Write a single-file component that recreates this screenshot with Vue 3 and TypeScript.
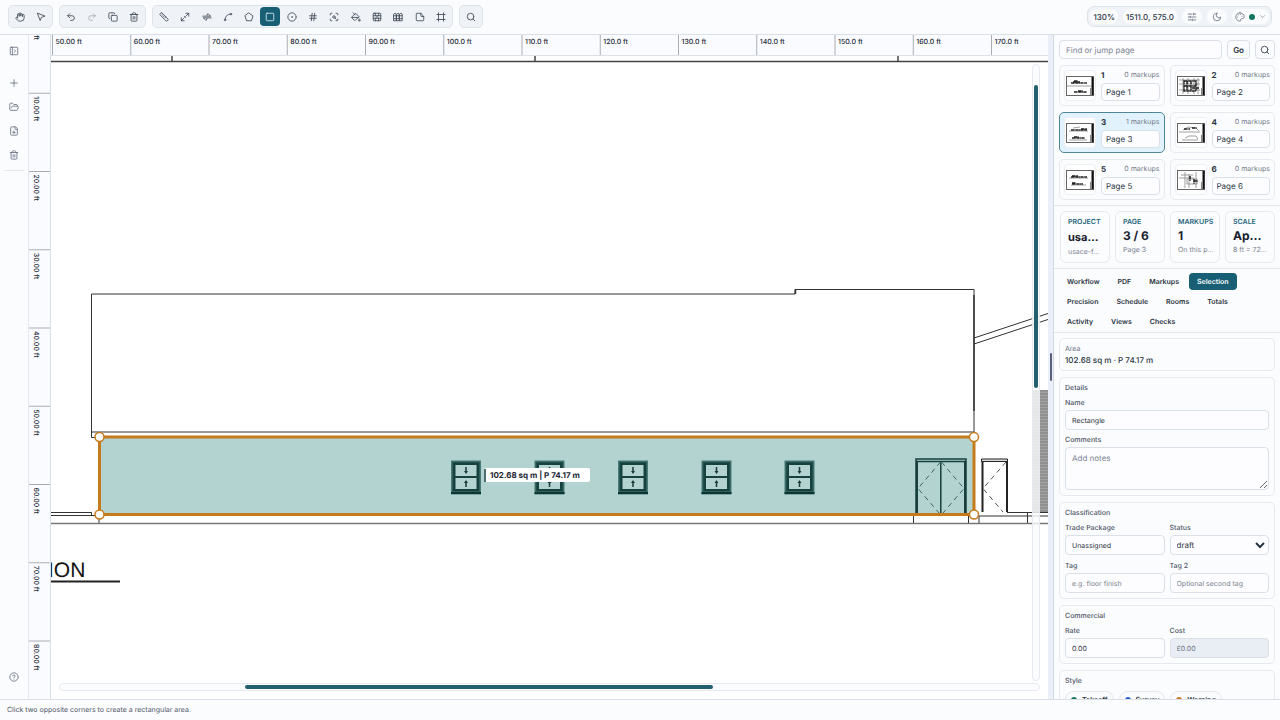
<script setup lang="ts">
import { ref } from 'vue'

interface Tool {
  label: string
  icon: string
  dim?: boolean
}

const icons: Record<string, string> = {
  hand: 'M18 11V6a2 2 0 0 0-4 0v4V4a2 2 0 0 0-4 0v6.500V6a2 2 0 0 0-4 0v8M18 8a2 2 0 1 1 4 0v6a8 8 0 0 1-8 8h-2c-2.800 0-4.500-.86-5.990-2.340l-3.600-3.600a2 2 0 0 1 2.830-2.820L7 15',
  pointer: 'M3.500 3.500l6.500 17 2.800-7.500 7.700-2.800z',
  undo: 'M9 14 4 9l5-5M4 9h10.500a5.500 5.500 0 0 1 0 11H11',
  redo: 'm15 14 5-5-5-5M20 9H9.500a5.500 5.500 0 0 0 0 11H13',
  copy: 'M10 8h10a2 2 0 0 1 2 2v10a2 2 0 0 1-2 2H10a2 2 0 0 1-2-2V10a2 2 0 0 1 2-2zM4 16a2 2 0 0 1-2-2V4a2 2 0 0 1 2-2h10a2 2 0 0 1 2 2',
  trash: 'M3 6h18M19 6v14a2 2 0 0 1-2 2H7a2 2 0 0 1-2-2V6M8 6V4a2 2 0 0 1 2-2h4a2 2 0 0 1 2 2v2M10 11v6M14 11v6',
  ruler: 'M7 2.500 21.500 17a2 2 0 0 1 0 2.500l-2 2a2 2 0 0 1-2.500 0L2.500 7a2 2 0 0 1 0-2.500l2-2a2 2 0 0 1 2.500 0zM10 6l-2 2M13 9l-2 2M16 12l-2 2',
  diagonal: 'M14 3h7v7M10 21H3v-7M21 3l-7 7M3 21l7-7M10.500 10.500l3 3',
  segments: 'M2 10h19l-5-4M22 14H3l5 4M14 4l-2 4M12 16l-2 4',
  arc: 'M5 17A12 12 0 0 1 17 5M21 5a2 2 0 1 1-4 0 2 2 0 0 1 4 0M7 19a2 2 0 1 1-4 0 2 2 0 0 1 4 0',
  polygon: 'M12 2.500 21.500 9.500 18 21H6L2.500 9.500z',
  square: 'M5 3h14a2 2 0 0 1 2 2v14a2 2 0 0 1-2 2H5a2 2 0 0 1-2-2V5a2 2 0 0 1 2-2z',
  circle: 'M22 12a10 10 0 1 1-20 0 10 10 0 0 1 20 0M13 12a1 1 0 1 1-2 0 1 1 0 0 1 2 0',
  hash: 'M4 9h16M4 15h16M10 3 8 21M16 3l-2 18',
  scan: 'M3 7V5a2 2 0 0 1 2-2h2M17 3h2a2 2 0 0 1 2 2v2M21 17v2a2 2 0 0 1-2 2h-2M7 21H5a2 2 0 0 1-2-2v-2M15 12a3 3 0 1 1-6 0 3 3 0 0 1 6 0M14.500 14.500 17 17',
  bucket: 'm19 11-8-8-8.600 8.600a2 2 0 0 0 0 2.800l5.200 5.200a2 2 0 0 0 2.800 0zM5 2l5 5M2 13h15M22 20a2 2 0 1 1-4 0c0-1.600 1.700-2.400 2-4 .3 1.600 2 2.400 2 4',
  wall: 'M5 3h14a2 2 0 0 1 2 2v14a2 2 0 0 1-2 2H5a2 2 0 0 1-2-2V5a2 2 0 0 1 2-2zM3 9h18M3 15h18M12 9v6M8 3v6M16 3v6M8 15v6M16 15v6',
  columns: 'M2 5l3-2 3 2v16H2zM9 5l3-2 3 2v16H9zM16 5l3-2 3 2v16h-6zM2 9h20M2 16h20',
  note: 'M21 11v8a2 2 0 0 1-2 2H5a2 2 0 0 1-2-2V5a2 2 0 0 1 2-2h9l7 8h-5a2 2 0 0 1-2-2V3',
  frame: 'M2 6h20M2 18h20M6 2v20M18 2v20',
  search: 'M19 11a8 8 0 1 1-16 0 8 8 0 0 1 16 0M21 21l-4.300-4.300',
  sidebar: 'M5 3h14a2 2 0 0 1 2 2v14a2 2 0 0 1-2 2H5a2 2 0 0 1-2-2V5a2 2 0 0 1 2-2zM8 3v18M13 9l3 3-3 3',
  plus: 'M4 12h16M12 4v16',
  folder: 'm6 14 1.500-2.900A2 2 0 0 1 9.200 10H20a2 2 0 0 1 1.900 2.500l-1.500 6a2 2 0 0 1-2 1.500H4a2 2 0 0 1-2-2V5a2 2 0 0 1 2-2h3.900a2 2 0 0 1 1.700.9l.8 1.200a2 2 0 0 0 1.700.9H18a2 2 0 0 1 2 2v2',
  file: 'M15 2H6a2 2 0 0 0-2 2v16a2 2 0 0 0 2 2h12a2 2 0 0 0 2-2V7zM14 2v4a2 2 0 0 0 2 2h4M9 15h6M12 12v6',
  help: 'M22 12a10 10 0 1 1-20 0 10 10 0 0 1 20 0M9.100 9a3 3 0 0 1 5.800 1c0 2-3 3-3 3M12 17v.1',
  sliders: 'M3 5h9M16 5h5M16 3v4M3 12h4M11 12h10M8 10v4M3 19h10M17 19h4M14 17v4',
  moon: 'M12 3a6 6 0 0 0 9 9 9 9 0 1 1-9-9z',
  palette: 'M12 2a10 10 0 0 0 0 20c1.700 0 2.500-1.300 1.800-2.700-1-1.900.2-3.300 2.200-3.300h2c3 0 4-2 4-4.500C22 6 17.500 2 12 2zM8 7v.1M13 6v.1M17 10v.1M6.500 12v.1',
  chevron: 'm5 9 7 7 7-7'
}

const toolGroups: { name: string; tools: Tool[] }[] = [
  { name: 'navigate', tools: [{ label: 'Pan', icon: 'hand' }, { label: 'Select', icon: 'pointer' }] },
  {
    name: 'edit',
    tools: [
      { label: 'Undo', icon: 'undo' },
      { label: 'Redo', icon: 'redo', dim: true },
      { label: 'Duplicate', icon: 'copy' },
      { label: 'Delete', icon: 'trash' }
    ]
  },
  {
    name: 'draw',
    tools: [
      { label: 'Calibrate', icon: 'ruler' },
      { label: 'Length', icon: 'diagonal' },
      { label: 'Polyline', icon: 'segments' },
      { label: 'Arc', icon: 'arc' },
      { label: 'Polygon', icon: 'polygon' },
      { label: 'Rectangle', icon: 'square' },
      { label: 'Circle', icon: 'circle' },
      { label: 'Count', icon: 'hash' },
      { label: 'Region', icon: 'scan' },
      { label: 'Fill', icon: 'bucket' },
      { label: 'Wall', icon: 'wall' },
      { label: 'Fence', icon: 'columns' },
      { label: 'Note', icon: 'note' },
      { label: 'Crop', icon: 'frame' }
    ]
  },
  { name: 'find', tools: [{ label: 'Search', icon: 'search' }] }
]
const activeTool = ref('Rectangle')

const railTools: Tool[] = [
  { label: 'New', icon: 'plus' },
  { label: 'Open', icon: 'folder' },
  { label: 'Add file', icon: 'file' },
  { label: 'Remove', icon: 'trash' }
]

const tickLabel = (feet: number) => (feet >= 100 ? feet.toFixed(1) : feet.toFixed(2)) + ' ft'
const tickStep = 78.25
const topTicks = Array.from({ length: 13 }, (_, i) => ({ at: 1.5 + i * tickStep, label: tickLabel(50 + i * 10) }))
const sideTicks = Array.from({ length: 9 }, (_, i) => ({ at: -20 + i * tickStep, label: tickLabel(i * 10) }))

const sashWindows = [451, 534.5, 618, 701.5, 784.5]
const handles = [
  { x: 99.5, y: 437 },
  { x: 974, y: 437 },
  { x: 99.5, y: 514.5 },
  { x: 974, y: 514.5 }
]

const selectedPage = ref(3)
const pages = ref([
  { id: 1, markups: 0, name: 'Page 1', thin: 'M1 10h24', bold: 'M5 7h16M7 6h7M8 5h4M8 16h13M12 15h5' },
  { id: 2, markups: 0, name: 'Page 2', thin: 'M2 4h21M2 8h21M2 14h21M6 2v16M11 2v16M17 2v16M21 2v16', bold: 'M7 5h12v10H7zM10 5v10M14 5v10M7 10h12M15 12h7' },
  { id: 3, markups: 1, name: 'Page 3', thin: 'M3 8h19M3 17h18M7 5l7-1', bold: 'M5 7h16M15 6h6M6 15h13M8 14h5' },
  { id: 4, markups: 0, name: 'Page 4', thin: 'M2 9h21M5 17h16M8 15l4-2h7l2 3M6 7l5-3 8 1 3 3', bold: 'M7 6h6M15 5h5' },
  { id: 5, markups: 0, name: 'Page 5', thin: 'M3 8h19M5 15h15', bold: 'M5 7h16M6 6h6M6 14h11M6 13h4' },
  { id: 6, markups: 0, name: 'Page 6', thin: 'M2 8h15M8 2v16M12 4v14M19 2v16M4 5h12M10 9h10v5H10z', bold: 'M17 9v5M13 6v5M17 11h4' }
])

const stats = [
  { label: 'Project', value: 'usa…', note: 'usace-f…', compact: true },
  { label: 'Page', value: '3 / 6', note: 'Page 3' },
  { label: 'Markups', value: '1', note: 'On this p…' },
  { label: 'Scale', value: 'Ap…', note: '8 ft = 72…' },
  { label: '', value: '', note: '' }
]

const tabs = ['Workflow', 'PDF', 'Markups', 'Selection', 'Precision', 'Schedule', 'Rooms', 'Totals', 'Activity', 'Views', 'Checks']
const activeTab = ref('Selection')

const query = ref('')
const form = ref({ name: 'Rectangle', comments: '', trade: 'Unassigned', status: 'draft', tag: '', tag2: '', rate: '0.00', cost: '£0.00' })
const presets = [
  { name: 'Takeoff', tone: 'green' },
  { name: 'Survey', tone: 'blue' },
  { name: 'Warning', tone: 'amber' }
]
</script>

<template>
  <div class="app">
    <header class="topbar">
      <div v-for="group in toolGroups" :key="group.name" class="group" :class="group.name">
        <button
          v-for="tool in group.tools"
          :key="tool.label"
          type="button"
          class="tool"
          :class="{ active: tool.label === activeTool, dim: tool.dim }"
          :aria-label="tool.label"
          @click="activeTool = tool.label"
        >
          <svg class="icon" viewBox="0 0 24 24"><path :d="icons[tool.icon]" /></svg>
        </button>
      </div>
      <div class="status-group">
        <span class="pill">130%</span>
        <span class="pill">1511.0, 575.0</span>
        <button type="button" class="pill" aria-label="Settings"><svg class="icon" viewBox="0 0 24 24"><path :d="icons.sliders" /></svg></button>
        <button type="button" class="pill" aria-label="Dark mode"><svg class="icon" viewBox="0 0 24 24"><path :d="icons.moon" /></svg></button>
        <button type="button" class="pill theme" aria-label="Theme">
          <svg class="icon" viewBox="0 0 24 24"><path :d="icons.palette" /></svg>
          <span class="dot green"></span>
          <svg class="icon caret" viewBox="0 0 24 24"><path :d="icons.chevron" /></svg>
        </button>
      </div>
    </header>

    <nav class="rail">
      <button type="button" class="rail-button" aria-label="Toggle sidebar"><svg class="icon" viewBox="0 0 24 24"><path :d="icons.sidebar" /></svg></button>
      <div class="rail-files">
        <button v-for="tool in railTools" :key="tool.label" type="button" class="rail-button" :aria-label="tool.label">
          <svg class="icon" viewBox="0 0 24 24"><path :d="icons[tool.icon]" /></svg>
        </button>
      </div>
      <button type="button" class="rail-button help" aria-label="Help"><svg class="icon" viewBox="0 0 24 24"><path :d="icons.help" /></svg></button>
    </nav>

    <main class="workspace">
      <svg class="ruler side">
        <g v-for="tick in sideTicks" :key="tick.at" :transform="`translate(0 ${tick.at})`">
          <path d="M0 0H22" />
          <text transform="translate(5 3) rotate(90)">{{ tick.label }}</text>
        </g>
      </svg>
      <svg class="ruler top">
        <g v-for="tick in topTicks" :key="tick.at" :transform="`translate(${tick.at} 0)`">
          <path d="M0 0V21" />
          <text x="3" y="9">{{ tick.label }}</text>
        </g>
      </svg>
      <div class="stage">
        <svg class="drawing">
          <defs>
            <pattern id="siding" width="4" height="3" patternUnits="userSpaceOnUse">
              <rect width="4" height="3" fill="#a2a2a2" />
              <path d="M0 1H4" stroke="#808080" stroke-width="1" />
            </pattern>
          </defs>
          <g transform="translate(-51 -56)" fill="none" stroke="#333" stroke-width="1">
            <path d="M51 61.500H1400M172 56V61M535 56V61M898 56V61" stroke="#444" stroke-width="1.500" />
            <path d="M99 437.500H91.500V294H795V289.500H974V432H91.500" />
            <path d="M974 295V411M795.500 289.500V294" stroke-width="1.500" />
            <path d="M974 338 1122 289M974 344 1122 295" />
            <path d="M51 512.500H91.500V516M51 515.500H99M99 515V524" />
            <path d="M51 523.500H1400" stroke="#777" stroke-width="1.500" />
            <path d="M913.500 516V523M968.500 516V523M979 516V523M975 516H1400M1007 512.500H1400M1027.500 512V523" />
            <rect x="1032" y="390" width="368" height="122" fill="url(#siding)" stroke="none" />

            <rect x="99.500" y="437" width="874.500" height="77.500" fill="#b3d3d0" stroke="none" />

            <g v-for="x in sashWindows" :key="x" :transform="`translate(${x} 460)`">
              <rect x="0.500" y="1" width="29" height="33" fill="#31605c" stroke="#4a7b77" />
              <rect x="2" y="2.500" width="26" height="28.500" fill="#16413f" stroke="none" />
              <path d="M4.500 5H25.500V16H4.500zM4.500 18H25.500V29H4.500z" fill="#b3d3d0" stroke="none" />
              <path d="M0 33H30" stroke="#0e3533" stroke-width="2" />
              <path d="M15 7V12M15 22V27" stroke="#163b3a" stroke-width="1.500" />
              <path d="M13 11h4L15 14zM13 23h4L15 20z" fill="#163b3a" stroke="none" />
            </g>

            <g stroke="#173f3d">
              <path d="M916 514V459H966V514M916 461.500H966M940.800 461V514" stroke-width="1.500" />
              <path d="M917 461V514M965 461V514" stroke-width="2" />
              <path d="M940.500 462 918 488.500 939 513M941.500 462 964 488.500 943 513" stroke="#3d6663" stroke-dasharray="5 4" />
            </g>
            <g stroke="#222">
              <path d="M981.500 459H1007.500V461.500H981.500z" fill="#ddd" />
              <path d="M982.500 461V512M1007 461V512" stroke-width="2" />
              <path d="M1006 462 983 488.500 1003 512" stroke="#555" stroke-dasharray="5 4" />
            </g>

            <rect x="99.500" y="437" width="874.500" height="77.500" stroke="#c57a1c" stroke-width="3" />
            <circle v-for="(handle, i) in handles" :key="i" :cx="handle.x" :cy="handle.y" r="4.500" fill="#fff" stroke="#c57a1c" stroke-width="1.500" />

            <rect x="484" y="468" width="106" height="14" rx="2" fill="#fff" stroke="none" />
            <path d="M485 469V482" stroke="#16413f" stroke-width="1.500" />
            <text class="measure" x="490" y="478">102.68 sq m | P 74.17 m</text>

            <text class="sheet-title" x="48" y="577">ION</text>
            <path d="M51 581.500H120" stroke="#222" stroke-width="2" />
          </g>
        </svg>
        <div class="scroll vertical"><span class="thumb"></span></div>
        <div class="scroll horizontal"><span class="thumb"></span></div>
      </div>
    </main>

    <div class="splitter"><span class="grip"></span></div>

    <aside class="panel">
      <section class="pages">
        <form class="jump" @submit.prevent>
          <input v-model="query" class="field" type="text" placeholder="Find or jump page" aria-label="Find or jump page" />
          <button type="submit" class="small-button">Go</button>
          <button type="button" class="small-button square" aria-label="Search pages"><svg class="icon" viewBox="0 0 24 24"><path :d="icons.search" /></svg></button>
        </form>
        <div class="page-grid">
          <article v-for="page in pages" :key="page.id" class="page-card" :class="{ selected: page.id === selectedPage }" @click="selectedPage = page.id">
            <div class="thumbnail">
              <svg viewBox="0 0 28 20">
                <rect x="0.500" y="0.500" width="27" height="19" fill="#fff" stroke="#666" />
                <path :d="page.thin" fill="none" stroke="#777" stroke-width="0.700" />
                <path :d="page.bold" fill="none" stroke="#222" stroke-width="1.500" stroke-dasharray="3 .4 1 .3" />
                <path d="M26.500 1V19" stroke="#111" stroke-width="2" />
                <path d="M24.500 12V19" stroke="#888" stroke-width="1" />
              </svg>
            </div>
            <div class="page-info">
              <div class="page-meta"><strong>{{ page.id }}</strong><span>{{ page.markups }} markups</span></div>
              <input v-model="page.name" class="field" type="text" :aria-label="`Name of page ${page.id}`" />
            </div>
          </article>
        </div>
      </section>

      <section class="stats">
        <div v-for="stat in stats" :key="stat.label" class="stat">
          <span class="stat-label">{{ stat.label }}</span>
          <strong :class="{ compact: stat.compact }">{{ stat.value }}</strong>
          <span class="stat-note">{{ stat.note }}</span>
        </div>
      </section>

      <nav class="tabs">
        <button v-for="tab in tabs" :key="tab" type="button" class="tab" :class="{ active: tab === activeTab }" @click="activeTab = tab">{{ tab }}</button>
      </nav>

      <div class="properties">
        <section class="card summary">
          <span class="caption">Area</span>
          <span class="reading">102.68 sq m · P 74.17 m</span>
        </section>
        <section class="card">
          <h2>Details</h2>
          <div class="cell"><label for="name">Name</label><input id="name" v-model="form.name" class="field" type="text" /></div>
          <div class="cell"><label for="comments">Comments</label><textarea id="comments" v-model="form.comments" class="field" placeholder="Add notes"></textarea></div>
        </section>
        <section class="card">
          <h2>Classification</h2>
          <div class="pair">
            <div class="cell"><label for="trade">Trade Package</label><input id="trade" v-model="form.trade" class="field" type="text" /></div>
            <div class="cell">
              <label for="status">Status</label>
              <select id="status" v-model="form.status" class="field"><option>draft</option></select>
            </div>
            <div class="cell"><label for="tag">Tag</label><input id="tag" v-model="form.tag" class="field" type="text" placeholder="e.g. floor finish" /></div>
            <div class="cell"><label for="tag2">Tag 2</label><input id="tag2" v-model="form.tag2" class="field" type="text" placeholder="Optional second tag" /></div>
          </div>
        </section>
        <section class="card">
          <h2>Commercial</h2>
          <div class="pair">
            <div class="cell"><label for="rate">Rate</label><input id="rate" v-model="form.rate" class="field" type="text" /></div>
            <div class="cell"><label for="cost">Cost</label><input id="cost" v-model="form.cost" class="field" type="text" disabled /></div>
          </div>
        </section>
        <section class="card">
          <h2>Style</h2>
          <div class="presets">
            <button v-for="preset in presets" :key="preset.name" type="button" class="preset"><span class="dot" :class="preset.tone"></span>{{ preset.name }}</button>
          </div>
        </section>
      </div>
    </aside>

    <footer class="footer">Click two opposite corners to create a rectangular area.</footer>
  </div>
</template>

<style>
body {
  margin: 0;
}
</style>

<style scoped>
.app {
  display: grid;
  grid-template: auto minmax(0, 1fr) auto / 29px minmax(0, 1fr) 5px 227px;
  height: 100vh;
  font-family: Inter, "Liberation Sans", sans-serif;
  font-size: 7px;
  line-height: 10px;
  text-rendering: geometricPrecision;
  color: #2a3441;
  background: #fbfcfe;
}
.app *,
.app *::before {
  box-sizing: border-box;
}
button,
input,
select,
textarea {
  font: inherit;
  color: inherit;
  margin: 0;
  text-rendering: inherit;
}
button {
  display: flex;
  align-items: center;
  justify-content: center;
  padding: 0;
  border: 0;
  background: none;
}
.icon {
  width: 10px;
  height: 10px;
  fill: none;
  stroke: currentColor;
  stroke-width: 2;
  stroke-linecap: round;
  stroke-linejoin: round;
}
.topbar {
  grid-column: 1 / -1;
  display: flex;
  align-items: center;
  gap: 6px;
  padding: 5px 8px 6px;
  border-bottom: 1px solid #dbe0e8;
}
.group {
  display: flex;
  justify-content: space-between;
  height: 23px;
  padding: 1px;
  border: 1px solid #dde3ea;
  border-radius: 5px;
  background: #eff3f8;
}
.navigate {
  width: 45px;
}
.edit {
  width: 87px;
}
.draw {
  width: 301px;
}
.find {
  width: 24px;
}
.tool {
  width: 20px;
  height: 19px;
  border-radius: 4px;
  color: #3c4653;
}
.tool.active {
  color: #d8eaf0;
  background: #185f76;
}
.tool.dim {
  opacity: 0.4;
}
.status-group {
  display: flex;
  align-items: center;
  gap: 5px;
  margin-left: auto;
  padding: 2px;
  border: 1px solid #dde3ea;
  border-radius: 7px;
  background: #eff3f8;
}
.pill {
  display: flex;
  align-items: center;
  justify-content: center;
  min-width: 20px;
  height: 15px;
  padding: 0 3px;
  border-radius: 8px;
  background: #fbfcfe;
  font-size: 8px;
  font-weight: 500;
  white-space: nowrap;
}
.pill .icon {
  color: #667080;
}
.theme {
  gap: 4px;
}
.pill .caret {
  width: 7px;
  height: 7px;
}
.dot {
  flex: none;
  width: 6px;
  height: 6px;
  border-radius: 50%;
}
.green {
  background: #147660;
}
.blue {
  background: #2b5bd0;
}
.amber {
  background: #c57a1c;
}
.rail {
  display: flex;
  flex-direction: column;
  align-items: center;
  gap: 12px;
  padding: 6px 0 12px;
  border-right: 1px solid #e3e7ee;
  color: #667080;
}
.rail-button {
  width: 20px;
  height: 20px;
}
.rail-files {
  display: flex;
  flex-direction: column;
  gap: 4px;
  padding-bottom: 5px;
  border-bottom: 1px solid #e3e7ee;
}
.help {
  margin-top: auto;
}
.workspace {
  display: grid;
  grid-template: 21px minmax(0, 1fr) / 22px minmax(0, 1fr);
  min-width: 0;
}
.ruler {
  width: 100%;
  height: 100%;
  background: #fafbfe;
}
.ruler path {
  stroke: #a9aeb6;
  stroke-width: 1;
}
.ruler text {
  font-size: 7px;
  font-weight: 500;
  fill: #222a35;
}
.side {
  grid-row: 1 / 3;
  border-right: 1px solid #dbe0e8;
}
.top {
  border-bottom: 1px solid #dbe0e8;
}
.stage {
  position: relative;
  min-width: 0;
  overflow: hidden;
  background: #fff;
}
.drawing {
  display: block;
  width: 100%;
  height: 100%;
}
.measure {
  font-size: 8px;
  font-weight: 700;
  fill: #1b2430;
  stroke: none;
}
.sheet-title {
  font-family: "Liberation Sans", sans-serif;
  font-size: 21px;
  fill: #111;
  stroke: none;
}
.scroll {
  position: absolute;
  display: flex;
  border: 1px solid #e6eaf0;
  border-radius: 5px;
  background: rgba(249, 251, 254, 0.8);
}
.vertical {
  top: 8px;
  right: 8px;
  bottom: 18px;
  width: 8px;
  padding: 20px 1px 0;
  justify-content: center;
}
.horizontal {
  right: 8px;
  bottom: 8px;
  left: 8px;
  height: 8px;
  padding-left: 185px;
  align-items: center;
}
.thumb {
  border-radius: 2px;
  background: #23606f;
}
.vertical .thumb {
  width: 4px;
  height: 51%;
}
.horizontal .thumb {
  width: 59%;
  height: 4px;
}
.splitter {
  display: flex;
  align-items: center;
  justify-content: center;
  background: #ebeff8;
}
.grip {
  width: 2px;
  height: 28px;
  border-radius: 1px;
  background: #5c5f7c;
}
.panel {
  display: flex;
  flex-direction: column;
  min-height: 0;
  border-left: 1px solid #d3d9e3;
}
.pages {
  display: flex;
  flex-direction: column;
  gap: 6px;
  padding: 5px;
  border-bottom: 1px solid #e3e7ee;
}
.jump {
  display: flex;
  gap: 5px;
}
.field {
  width: 100%;
  min-width: 0;
  height: 20px;
  padding: 0 6px;
  border: 1px solid #dbe0e8;
  border-radius: 4px;
  background: #fdfdff;
  outline: 0;
}
.field::placeholder {
  color: #7a828e;
  opacity: 1;
}
.jump .field,
.page-info .field {
  font-size: 8px;
}
.small-button {
  flex: none;
  height: 19px;
  padding: 0 5px;
  border: 1px solid #dbe0e8;
  border-radius: 4px;
  font-size: 8px;
  font-weight: 600;
}
.square {
  width: 20px;
  padding: 0;
}
.jump .field {
  height: 19px;
}
.page-grid {
  display: grid;
  grid-template-columns: 1fr 1fr;
  gap: 6px 5px;
}
.page-card {
  display: grid;
  grid-template-columns: 32px minmax(0, 1fr);
  gap: 5px;
  height: 41px;
  padding: 4px;
  border: 1px solid #e6eaf0;
  border-radius: 5px;
}
.page-card.selected {
  border-color: #4f8799;
  background: #e1f2fc;
}
.thumbnail {
  display: flex;
  align-items: center;
  height: 31px;
  padding: 1px;
  border: 1px solid #eceff4;
  border-radius: 4px;
  background: #fff;
}
.thumbnail svg {
  width: 100%;
}
.page-info {
  display: flex;
  flex-direction: column;
  justify-content: space-between;
}
.page-meta {
  display: flex;
  justify-content: space-between;
}
.page-meta strong {
  font-size: 8px;
}
.page-meta span {
  color: #737b88;
}
.page-info .field {
  height: 18px;
  padding: 0 4px;
}
.stats {
  display: flex;
  gap: 5px;
  padding: 5px 6px;
  overflow: hidden;
  border-bottom: 1px solid #e3e7ee;
}
.stat {
  flex: none;
  display: flex;
  flex-direction: column;
  width: 50px;
  height: 52px;
  padding: 5px 0 5px 7px;
  border: 1px solid #e6eaf0;
  border-radius: 6px;
  white-space: nowrap;
  overflow: hidden;
}
.stat-label {
  color: #1d657c;
  font-weight: 600;
  text-transform: uppercase;
}
.stat strong {
  font-size: 12px;
  line-height: 18px;
  color: #18202b;
}
.stat .compact {
  font-size: 11px;
  line-height: 20px;
}
.stat-note {
  color: #7a828e;
}
.tabs {
  display: flex;
  flex-wrap: wrap;
  gap: 3px 2px;
  padding: 4px 5px 2px;
  border-bottom: 1px solid #e3e7ee;
}
.tab {
  height: 17px;
  padding: 0 8px;
  border-radius: 4px;
  font-weight: 600;
}
.tab.active {
  color: #fff;
  background: #185f76;
}
.properties {
  flex: 1;
  display: flex;
  flex-direction: column;
  gap: 6px;
  min-height: 0;
  padding: 5px;
  overflow-y: auto;
  scrollbar-width: none;
}
.card {
  flex: none;
  display: flex;
  flex-direction: column;
  gap: 5px;
  padding: 5px;
  border: 1px solid #e6eaf0;
  border-radius: 5px;
}
.card h2 {
  margin: 0;
  font-size: 7px;
  font-weight: 500;
  color: #4d5665;
}
.card label {
  color: #4d5665;
  font-weight: 500;
}
.summary {
  gap: 1px;
}
.caption {
  color: #6a7382;
}
.reading {
  font-size: 8px;
  font-weight: 500;
}
textarea.field {
  display: block;
  height: 43px;
  padding: 5px 6px;
  font-size: 8px;
  resize: vertical;
}
.pair {
  display: grid;
  grid-template-columns: 1fr 1fr;
  gap: 6px 5px;
}
.cell {
  display: flex;
  flex-direction: column;
  gap: 2px;
  min-width: 0;
}
select.field {
  padding: 0 2px;
  font-size: 8px;
}
.field:disabled {
  background: #e9eef5;
  color: #6a7382;
}
.presets {
  display: flex;
  gap: 5px;
}
.preset {
  gap: 5px;
  height: 17px;
  padding: 0 5px;
  border: 1px solid #e3e7ee;
  border-radius: 9px;
  font-weight: 600;
}
.footer {
  grid-column: 1 / -1;
  height: 21px;
  padding: 5px 7px;
  border-top: 1px solid #dbe0e8;
  color: #4d5665;
}
</style>
